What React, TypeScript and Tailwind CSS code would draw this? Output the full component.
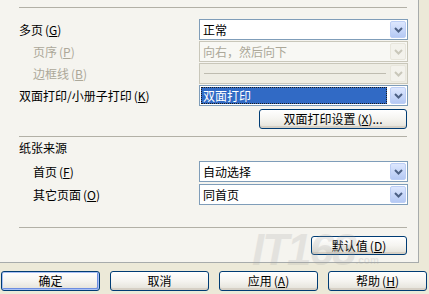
import React from "react";

const font = "font-['Noto_Sans_CJK_SC',sans-serif]";

// little chevron inside the XP dropdown button
const DropButton = ({ disabled }: { disabled?: boolean }) => (
  <div
    className={
      disabled
        ? "mr-px flex h-[17px] w-[16px] items-center justify-center rounded-[2px] border border-[#E8E6DC] bg-[#F3F2EC]"
        : "mr-px flex h-[17px] w-[16px] items-center justify-center rounded-[2px] border border-[#BCCEF5] bg-gradient-to-b from-[#DDE7FE] to-[#B5C9F4]"
    }
  >
    <svg width="9" height="6" viewBox="0 0 9 6">
      <path
        d="M1 1 L4.5 4.5 L8 1"
        fill="none"
        stroke={disabled ? "#C9C7BA" : "#4D6185"}
        strokeWidth="2"
      />
    </svg>
  </div>
);

interface ComboProps {
  text?: string;
  disabled?: boolean;
  selected?: boolean;
  line?: boolean;
}

const Combo: React.FC<ComboProps> = ({ text, disabled, selected, line }) => {
  const box = disabled
    ? line
      ? "flex h-[21px] w-[209px] items-center border border-[#C9C7BA] bg-[#EEEDE4]"
      : "flex h-[21px] w-[209px] items-center border border-[#C9C7BA] bg-[#F8F8F4]"
    : "flex h-[21px] w-[209px] items-center border border-[#7F9DB9] bg-white";

  return (
    <div className={box}>
      <div className="flex h-full min-w-0 flex-1 items-center px-px">
        {line ? (
          <div className="mx-[3px] h-px flex-1 bg-[#BEBCB0]" />
        ) : selected ? (
          <div className="mr-[2px] flex h-[17px] flex-1 items-center border border-dotted border-[#1C1C1C] bg-[#316AC5] pl-px text-white">
            {text}
          </div>
        ) : (
          <span className={disabled ? "pl-[2px] text-[#ACA899]" : "pl-[2px] text-black"}>{text}</span>
        )}
      </div>
      <DropButton disabled={disabled} />
    </div>
  );
};

const XpButton = ({
  children,
  className,
  isDefault,
}: {
  children: React.ReactNode;
  className: string;
  isDefault?: boolean;
}) => (
  <div
    className={`${className} relative z-10 flex items-center justify-center rounded-[3px] border border-[#003C74] bg-gradient-to-b from-white via-[#F5F4F0] to-[#E3E1D8] text-black ${
      isDefault ? "shadow-[inset_0_0_0_1px_#A9C0F5,inset_-1px_-1px_0_1px_#6C8DE0]" : "shadow-[inset_0_-2px_0_#D6D0C5]"
    }`}
  >
    {children}
  </div>
);

const Sep = () => <div className="h-px w-[388px] bg-[#B2B0A6]" />;

const Row = ({ label, indent, children }: { label: React.ReactNode; indent?: boolean; children: React.ReactNode }) => (
  <div className="flex h-[21px] items-center">
    <div className={indent ? "w-[180px] pl-[14px]" : "w-[180px]"}>{label}</div>
    {children}
  </div>
);

const Key = ({ k }: { k: string }) => (
  <span className="ml-[2px]">
    (<u>{k}</u>)
  </span>
);

export default function App() {
  return (
    <div className={`relative h-[294px] w-[429px] overflow-hidden bg-[#ECE9D8] text-[12px] leading-none ${font}`}>
      <div className="pointer-events-none absolute left-[252px] top-[228px] z-20 flex items-end opacity-20">
        <span className="font-['Liberation_Sans',sans-serif] text-[44px] font-bold italic leading-none tracking-[-2px] text-[#A0A0A0]">
          IT168
        </span>
        <span className="mb-[6px] ml-px font-['Liberation_Sans',sans-serif] text-[10px] font-bold text-[#A0A0A0]">
          .com
        </span>
      </div>

      {/* tab page */}
      <div className="box-border flex h-[263px] w-[419px] flex-col border-r border-b border-[#A7ABAB] bg-[#F5F4EF] pl-[19px] pr-[10px]">
        <div className="mt-[7px]">
          <Sep />
        </div>

        <div className="mt-[11px] flex flex-col gap-px">
          <Row label={<span>多页<Key k="G" /></span>}>
            <Combo text="正常" />
          </Row>
          <Row indent label={<span className="text-[#ACA899]">页序<Key k="P" /></span>}>
            <Combo text="向右，然后向下" disabled />
          </Row>
          <Row indent label={<span className="text-[#ACA899]">边框线<Key k="B" /></span>}>
            <Combo disabled line />
          </Row>
          <Row label={<span>双面打印/小册子打印<Key k="K" /></span>}>
            <Combo text="双面打印" selected />
          </Row>
        </div>

        <div className="mt-[3px] flex justify-end pr-px">
          <XpButton className="h-[20px] w-[148px]">
            双面打印设置<Key k="X" />...
          </XpButton>
        </div>

        <div className="mt-[7px]">
          <Sep />
        </div>

        <div className="flex h-[22px] items-center">纸张来源</div>

        <div className="mt-[2px] flex flex-col gap-[2px]">
          <Row indent label={<span>首页<Key k="F" /></span>}>
            <Combo text="自动选择" />
          </Row>
          <Row indent label={<span>其它页面<Key k="O" /></span>}>
            <Combo text="同首页" />
          </Row>
        </div>

        <div className="mt-[22px]">
          <Sep />
        </div>

        <div className="mt-[8px] flex justify-end pr-px">
          <XpButton className="h-[19px] w-[96px]">
            默认值<Key k="D" />
          </XpButton>
        </div>
      </div>

      {/* dialog buttons */}
      <div className="mt-[8px] flex gap-[10px] pl-px">
        <XpButton className="h-[20px] w-[99px]" isDefault>
          确定
        </XpButton>
        <XpButton className="h-[20px] w-[99px]">取消</XpButton>
        <XpButton className="h-[20px] w-[99px]">
          应用<Key k="A" />
        </XpButton>
        <XpButton className="h-[20px] w-[99px]">
          帮助<Key k="H" />
        </XpButton>
      </div>
    </div>
  );
}
